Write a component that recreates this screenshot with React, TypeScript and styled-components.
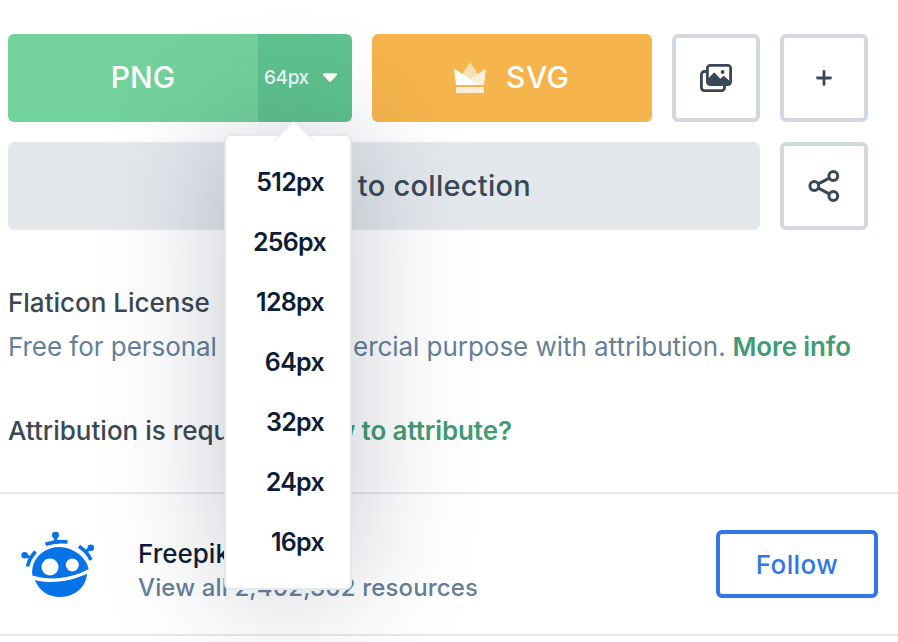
import React from "react";
import styled, { createGlobalStyle } from "styled-components";

const GlobalStyle = createGlobalStyle`
  * { box-sizing: border-box; }
  body {
    margin: 0;
    background: #fff;
    font-family: Inter, "Liberation Sans", sans-serif;
    overflow: hidden;
  }
  button { font-family: inherit; margin: 0; padding: 0; cursor: pointer; }
`;

const Page = styled.main`
  width: 898px;
  height: 642px;
  overflow: hidden;
  display: flex;
  flex-direction: column;
  color: #3a4856;
`;

const Actions = styled.section`
  display: grid;
  grid-template-columns: 344px 280px 88px 88px;
  grid-auto-rows: 88px;
  gap: 20px;
  padding: 34px 8px 0;
`;

const PngGroup = styled.div`
  position: relative;
  display: flex;
`;

const PngButton = styled.button`
  width: 250px;
  border: 0;
  border-radius: 6px 0 0 6px;
  background: #73d19b;
  color: #fff;
  font-size: 30px;
  font-weight: 500;
  padding: 0 0 2px 20px;
`;

const SizeButton = styled.button`
  flex: 1;
  display: flex;
  align-items: center;
  gap: 13px;
  padding: 0 0 1px 6px;
  border: 0;
  border-radius: 0 6px 6px 0;
  background: #5fc28f;
  color: #f1faf5;
  font-size: 19px;
  font-weight: 500;
  letter-spacing: -0.4px;
`;

const SvgButton = styled.button`
  display: flex;
  align-items: center;
  gap: 20px;
  padding-left: 82px;
  border: 0;
  border-radius: 6px;
  background: #f5b44c;
  color: #fff;
  font-size: 30px;
  font-weight: 500;
  letter-spacing: 0.5px;
`;

const SvgLabel = styled.span`
  padding-bottom: 2px;
`;

const IconButton = styled.button`
  display: flex;
  align-items: center;
  justify-content: center;
  border: 4px solid #d1d9df;
  border-radius: 6px;
  background: #fff;
  color: #3a4856;
`;

const CollectionButton = styled.button`
  grid-column: span 3;
  border: 0;
  border-radius: 6px;
  background: #e3e8ec;
  color: #3a4856;
  font-size: 29px;
  font-weight: 500;
  letter-spacing: 0.27px;
  text-align: right;
  padding: 0 229px 2px 0;
`;

const SizeMenu = styled.ul`
  position: absolute;
  z-index: 2;
  top: 100px;
  left: 216px;
  width: 128px;
  height: 456px;
  margin: 0;
  padding: 16px 0 0;
  list-style: none;
  background: #fff;
  border: 2px solid #e3e8ec;
  border-radius: 6px;
  box-shadow: 0 0 120px rgba(18, 30, 60, 0.25);
`;

const MenuArrow = styled.svg`
  position: absolute;
  top: -16px;
  left: 47px;
`;

const SizeOption = styled.li<{ $end?: number }>`
  display: flex;
  align-items: center;
  justify-content: flex-end;
  height: 60px;
  padding-right: ${(p) => p.$end ?? 26}px;
  color: #0e1d35;
  font-size: 25px;
  font-weight: 600;
  letter-spacing: -0.7px;
`;

const License = styled.section`
  display: flex;
  flex-direction: column;
  padding: 51px 8px 0;
  font-size: 26px;
  line-height: 44px;
  white-space: nowrap;
`;

const Heading = styled.h2`
  margin: 0;
  font-size: 26px;
  font-weight: 500;
  display: flex;
`;

const Terms = styled.p`
  margin: 0;
  display: flex;
  justify-content: space-between;
  width: 843px;
  color: #65809a;
  letter-spacing: -0.04px;
`;

const Attribution = styled(Heading)`
  margin-top: 40px;
  width: 504px;
  justify-content: space-between;
`;

const GreenLink = styled.a`
  color: #439b74;
  font-weight: 600;
  letter-spacing: -0.1px;
`;

const Author = styled.section`
  display: flex;
  align-items: center;
  height: 144px;
  margin-top: 39px;
  padding: 0 20px;
  border-top: 2px solid #e3e8ec;
  border-bottom: 2px solid #e3e8ec;
`;

const AuthorText = styled.div`
  flex: 1;
  display: flex;
  flex-direction: column;
  margin-left: 42px;
  padding-top: 13px;
  line-height: 34px;
  white-space: nowrap;
`;

const AuthorName = styled.strong`
  color: #0e1d35;
  font-size: 26px;
  font-weight: 500;
`;

const AuthorCount = styled.span`
  color: #65809a;
  font-size: 24px;
  font-weight: 500;
  letter-spacing: 0.14px;
`;

const FollowButton = styled.button`
  width: 162px;
  height: 68px;
  border: 4px solid #3276e6;
  border-radius: 6px;
  background: #fff;
  color: #3276e6;
  font-size: 26px;
  font-weight: 500;
  letter-spacing: 0.4px;
`;

const sizes: { label: string; end?: number }[] = [
  { label: "512px" },
  { label: "256px", end: 24 },
  { label: "128px" },
  { label: "64px" },
  { label: "32px" },
  { label: "24px" },
  { label: "16px" },
];

const Caret = () => (
  <svg width="16" height="11" viewBox="0 0 16 11">
    <path d="M2.200 1.200h11.600c1.200 0 1.800 1.300 1 2.100L9.300 9.200c-.7.8-1.900.8-2.600 0L1.200 3.300c-.8-.8-.2-2.100 1-2.100z" fill="#fff" />
  </svg>
);

const Crown = () => (
  <svg width="32" height="32" viewBox="0 0 32 32">
    <path d="M16 0l8 12.500-2 10.500H9L8 12.500z" fill="#fff" fillOpacity=".58" />
    <path d="M32 6.500L30 23H10l6-6z" fill="#fdeed7" />
    <path d="M0 6.500L25 23H2z" fill="#fff" />
    <path d="M2 25h28v6H2z" fill="#fdeed7" />
  </svg>
);

const Gallery = () => (
  <svg width="32" height="28" viewBox="0 0 32 28" fill="none" stroke="currentColor" strokeWidth="2.800">
    <path d="M7 7.500H4.400a3 3 0 0 0-3 3V23.600a3 3 0 0 0 3 3H21.600a3 3 0 0 0 3-3V21" />
    <rect x="7.400" y="1.400" width="23.200" height="19.200" rx="2.800" />
    <path d="M7.500 15.200L13.500 9c.5-.5 1-.5 1.500 0l5.300 5.800 2.700-2.400c.5-.4 1-.4 1.500 0l6.200 5.400v1.500a1.500 1.500 0 0 1-1.500 1.500H9a1.500 1.500 0 0 1-1.500-1.500z" fill="currentColor" stroke="none" />
    <circle cx="22.600" cy="8" r="1.900" fill="currentColor" stroke="none" />
  </svg>
);

const Plus = () => (
  <svg width="16" height="16" viewBox="0 0 16 16" stroke="currentColor" strokeWidth="2.800" strokeLinecap="round">
    <path d="M8 1.500v13M1.500 8h13" />
  </svg>
);

const Share = () => (
  <svg width="32" height="32" viewBox="0 0 32 32" fill="none" stroke="currentColor" strokeWidth="3">
    <circle cx="6.300" cy="16" r="4.400" />
    <circle cx="25.300" cy="6" r="4.400" />
    <circle cx="25.300" cy="26" r="4.400" />
    <path d="M10.400 13.800L21.200 8.200M10.400 18.200l10.800 5.600" />
  </svg>
);

const Robot = () => (
  <svg width="76" height="70" viewBox="0 0 76 70" fill="#0873e6">
    <path d="M12.300 43.500C11.300 34 15 26 22 20.800 30 14.500 42 13.300 51.500 17.800 61 22 67.500 29.500 68.500 37.200 51 46.500 31 49 12.300 43.500z" />
    <path d="M14.800 48C33 52.800 52 48.500 67 41.800 66 55.500 54.500 65 40 65 28 65 19 58.500 14.800 48z" />
    <circle cx="30" cy="35" r="8.500" fill="#fff" />
    <circle cx="52.300" cy="33" r="6.500" fill="#fff" />
    <g fill="none" stroke="#0873e6" strokeWidth="3.600">
      <path d="M25.500 12.300Q36 8.500 47.500 10" />
      <path d="M35.600 10V3" strokeWidth="3.200" />
      <path d="M7.500 34.500Q9 27 15.500 19.500" />
      <path d="M11 25.800L4.500 23.500" strokeWidth="3.200" />
      <path d="M59 14.200Q68 20.500 71 28" />
      <path d="M66 19.500L70.500 15.800" strokeWidth="3.200" />
    </g>
    <circle cx="35.500" cy="2.900" r="3.500" />
    <circle cx="4.700" cy="23.200" r="3.300" />
    <circle cx="70.800" cy="15.800" r="3.300" />
  </svg>
);

const LogoSlot = styled.div`
  width: 76px;
  height: 70px;
  margin-top: 6px;
`;

export default function App() {
  return (
    <Page>
      <GlobalStyle />
      <Actions>
        <PngGroup>
          <PngButton>PNG</PngButton>
          <SizeButton>
            64px
            <Caret />
          </SizeButton>
          <SizeMenu>
            <MenuArrow width="42" height="22" viewBox="0 0 42 22">
              <path d="M1 21L21 1.500 41 21z" fill="#fff" />
              <path d="M1 21L21 1.500 41 21" fill="none" stroke="#d9dde2" strokeWidth=".6" />
            </MenuArrow>
            {sizes.map((s) => (
              <SizeOption key={s.label} $end={s.end}>
                {s.label}
              </SizeOption>
            ))}
          </SizeMenu>
        </PngGroup>
        <SvgButton>
          <Crown />
          <SvgLabel>SVG</SvgLabel>
        </SvgButton>
        <IconButton aria-label="Similar images">
          <Gallery />
        </IconButton>
        <IconButton aria-label="More">
          <Plus />
        </IconButton>
        <CollectionButton>Add to collection</CollectionButton>
        <IconButton aria-label="Share">
          <Share />
        </IconButton>
      </Actions>
      <License>
        <Heading>Flaticon License</Heading>
        <Terms>
          <span>Free for personal and commercial purpose with attribution.</span>
          <GreenLink>More info</GreenLink>
        </Terms>
        <Attribution>
          <span>Attribution is required</span>
          <GreenLink>How to attribute?</GreenLink>
        </Attribution>
      </License>
      <Author>
        <LogoSlot>
          <Robot />
        </LogoSlot>
        <AuthorText>
          <AuthorName>Freepik</AuthorName>
          <AuthorCount>View all 2,402,302 resources</AuthorCount>
        </AuthorText>
        <FollowButton>Follow</FollowButton>
      </Author>
    </Page>
  );
}
